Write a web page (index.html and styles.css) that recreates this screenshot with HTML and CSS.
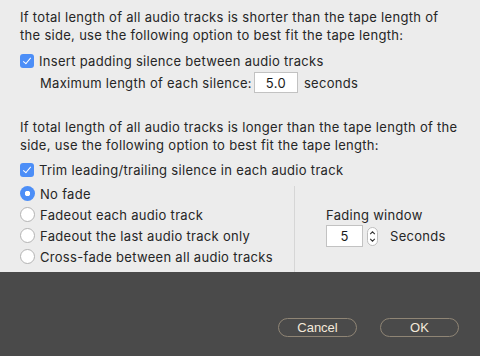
FILE: index.html
```html
<!DOCTYPE html>
<html lang="en">
<head>
  <meta charset="UTF-8" />
  <title>Silence options</title>
  <link rel="stylesheet" href="styles.css">
</head>
<body>
  <div class="panel">
    <p class="note">If total length of all audio tracks is shorter than the tape length of<br>the side, use the following option to best fit the tape length:</p>
    <label class="check"><span class="box"></span>Insert padding silence between audio tracks</label>
    <div class="silence">
      <span>Maximum length of each silence:</span>
      <span class="field wide">5.0</span>
      <span>seconds</span>
    </div>

    <p class="note second">If total length of all audio tracks is longer than the tape length of the<br>side, use the following option to best fit the tape length:</p>
    <label class="check trim"><span class="box"></span>Trim leading/trailing silence in each audio track</label>

    <div class="fade">
      <div class="radios">
        <label class="radio on"><span class="dot"></span>No fade</label>
        <label class="radio"><span class="dot"></span>Fadeout each audio track</label>
        <label class="radio"><span class="dot"></span>Fadeout the last audio track only</label>
        <label class="radio"><span class="dot"></span>Cross-fade between all audio tracks</label>
      </div>
      <div class="window">
        <div class="window-label">Fading window</div>
        <div class="window-row">
          <span class="field narrow">5</span>
          <svg class="stepper" width="11" height="19" viewBox="0 0 11 19">
            <rect x="0.5" y="0.5" width="10" height="18" rx="5" fill="#fff" stroke="#bdbdbd"/>
            <path d="M3.2 7.2 L5.5 4.8 L7.8 7.2" fill="none" stroke="#333" stroke-width="1.1"/>
            <path d="M3.2 11.8 L5.5 14.2 L7.8 11.8" fill="none" stroke="#333" stroke-width="1.1"/>
          </svg>
          <span>Seconds</span>
        </div>
      </div>
    </div>
  </div>

  <div class="footer">
    <button>Cancel</button>
    <button>OK</button>
  </div>
</body>
</html>
```

FILE: styles.css
```css
body {
  margin: 0;
  width: 480px;
  height: 356px;
  font-family: Inter, 'Liberation Sans', sans-serif;
  font-size: 13px;
  letter-spacing: 0.3px;
  color: #262626;
  background: #4a4a4a;
}
.panel {
  background: #ececec;
  height: 272px;
  padding: 8px 0 0 20px;
  box-sizing: border-box;
}
.note {
  margin: 0;
  line-height: 18px;
}
.note.second {
  margin-top: 25px;
}
.check {
  display: flex;
  align-items: center;
  gap: 5px;
  height: 18px;
  margin-top: 8px;
}
.check.trim {
  margin-top: 7px;
}
.box {
  width: 14px;
  height: 14px;
  border-radius: 3px;
  background: #4c8ef7;
  position: relative;
}
.box::after {
  content: '';
  position: absolute;
  left: 4.5px;
  top: 2px;
  width: 3px;
  height: 7px;
  border: solid #fff;
  border-width: 0 1.6px 1.6px 0;
  transform: rotate(40deg);
}
.silence {
  display: flex;
  align-items: center;
  margin: 2px 0 0 20px;
  height: 21px;
}
.field {
  display: inline-block;
  height: 21px;
  line-height: 21px;
  box-sizing: border-box;
  background: #fff;
  border: 1px solid #c2c2c2;
  text-align: center;
  color: #1a1a1a;
}
.field.wide {
  width: 44px;
  margin: 0 6px 0 2px;
}
.field.narrow {
  width: 37px;
  height: 22px;
  line-height: 20px;
}
.fade {
  display: flex;
  margin-top: 4px;
  height: 89px;
}
.radios {
  width: 274px;
}
.radio {
  display: flex;
  align-items: center;
  gap: 5px;
  height: 21px;
}
.dot {
  width: 15px;
  height: 15px;
  box-sizing: border-box;
  border-radius: 50%;
  background: #fff;
  border: 1px solid #b3b3b3;
}
.radio.on .dot {
  border: none;
  background: radial-gradient(circle, #fff 0 2.5px, #4c8ef7 3px);
}
.window {
  border-left: 1px solid #d6d6d6;
  margin-top: 3px;
  padding: 20px 0 0 31px;
}
.window-label {
  line-height: 18px;
}
.window-row {
  display: flex;
  align-items: center;
  margin-top: 1px;
}
.stepper {
  margin: 0 12px 0 4px;
}
.footer {
  display: flex;
  justify-content: flex-end;
  gap: 23px;
  padding: 46px 21px 0 0;
}
.footer button {
  width: 79px;
  height: 19px;
  padding: 0;
  border: 1px solid #8f8575;
  border-radius: 10px;
  background: #4a4a4a;
  color: #f4e9da;
  font-family: 'Liberation Sans', sans-serif;
  font-size: 13px;
  letter-spacing: 0;
}
```
